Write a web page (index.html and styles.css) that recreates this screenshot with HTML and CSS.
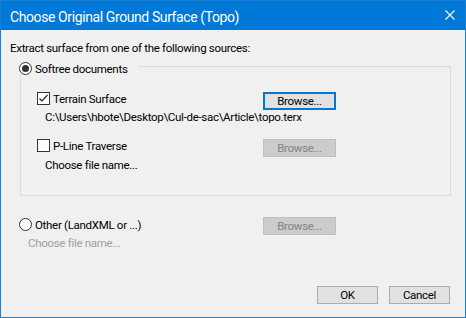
FILE: index.html
```html
<!DOCTYPE html>
<html>
<head>
<meta charset="utf-8">
<link rel="stylesheet" href="styles.css">
</head>
<body>
<div class="window">
  <div class="titlebar">
    <span class="title">Choose Original Ground Surface (Topo)</span>
    <svg class="close" width="10" height="10" viewBox="0 0 10 10"><path d="M0.5 0.5 L9.5 9.5 M9.5 0.5 L0.5 9.5" stroke="#fff" stroke-width="1.1" fill="none"/></svg>
  </div>
  <div class="content">
    <p class="intro">Extract surface from one of the following sources:</p>
    <div class="group">
      <div class="legend"><span class="radio checked"></span><span>Softree documents</span></div>
      <div class="row row-first">
        <div class="check"><span class="box"><svg width="11" height="11" viewBox="0 0 11 11"><polyline points="1.5,5.5 4,8 9.5,2" fill="none" stroke="#222" stroke-width="1.2"/></svg></span><span>Terrain Surface</span></div>
        <button class="btn focused">Browse...</button>
      </div>
      <div class="path">C:\Users\hbote\Desktop\Cul-de-sac\Article\topo.terx</div>
      <div class="row row-second">
        <div class="check"><span class="box"></span><span>P-Line Traverse</span></div>
        <button class="btn" disabled>Browse...</button>
      </div>
      <div class="path path-name">Choose file name...</div>
    </div>
    <div class="row other">
      <div class="check other-label"><span class="radio"></span><span>Other (LandXML or ...)</span></div>
      <button class="btn" disabled>Browse...</button>
    </div>
    <div class="filename">Choose file name...</div>
    <div class="actions">
      <button class="btn action">OK</button>
      <button class="btn action">Cancel</button>
    </div>
  </div>
</div>
</body>
</html>
```

FILE: styles.css
```css
* { box-sizing: border-box; }
html, body { margin: 0; padding: 0; background: #f0f0f0; }
body { font-family: Roboto, "Noto Sans", sans-serif; font-size: 11.5px; letter-spacing: -0.3px; color: #000; }

.window {
  width: 466px;
  height: 318px;
  border: 1px solid #1a7fd4;
  background: #f0f0f0;
  overflow: hidden;
}

.titlebar {
  height: 29px;
  background: #0078d7;
  color: #fff;
  display: flex;
  justify-content: space-between;
  padding: 0 10px 0 9px;
}
.title { font-size: 14px; letter-spacing: -0.4px; line-height: 25px; margin-top: 4px; }
.close { margin-top: 9px; }

.content { padding: 0 14px 0 9px; }

.intro { margin: 11px 0 0; line-height: 14px; }

.group {
  margin: 11px 0 0 10px;
  border: 1px solid #dcdcdc;
  padding: 0 0 23px 0;
}
.legend {
  display: flex;
  align-items: center;
  gap: 3px;
  width: fit-content;
  height: 13px;
  margin: -5px 0 0 -2px;
  padding-right: 10px;
  background: #f0f0f0;
}

.radio {
  width: 13px;
  height: 13px;
  border: 1px solid #333;
  border-radius: 50%;
  background: #fff;
  display: flex;
  align-items: center;
  justify-content: center;
  flex: none;
}
.radio.checked::after {
  content: "";
  width: 7px;
  height: 7px;
  border-radius: 50%;
  background: #333;
}

.row {
  display: grid;
  grid-template-columns: 226px 73px;
  height: 18px;
  padding-left: 16px;
}
.row-first { margin-top: 17px; }
.row-second { margin-top: 15px; }

.check {
  display: flex;
  align-items: center;
  gap: 3px;
  height: 13px;
}
.box {
  width: 13px;
  height: 13px;
  border: 1px solid #333;
  background: #fff;
  flex: none;
}
.box svg { display: block; }

.path { margin-left: 24px; line-height: 14px; }
.path-name { margin-top: 1px; }

.btn {
  font: inherit;
  font-size: 11.5px;
  letter-spacing: -0.3px;
  color: #000;
  background: #e1e1e1;
  border: 1px solid #adadad;
  padding: 0;
  height: 18px;
  line-height: 14px;
  text-align: center;
}
.btn.focused { border: 2px solid #0078d7; }
.btn:disabled { background: #cccccc; border-color: #bfbfbf; color: #838383; }

.other {
  margin-top: 21px;
  padding-left: 9px;
  grid-template-columns: 244px 73px;
}
.other-label { margin-top: 1px; gap: 3px; }

.filename { margin: 1px 0 0 18px; line-height: 14px; color: #a0a0a0; }

.actions {
  display: flex;
  justify-content: flex-end;
  gap: 11px;
  margin: 36px 1px 0 0;
}
.action { width: 61px; }
```
